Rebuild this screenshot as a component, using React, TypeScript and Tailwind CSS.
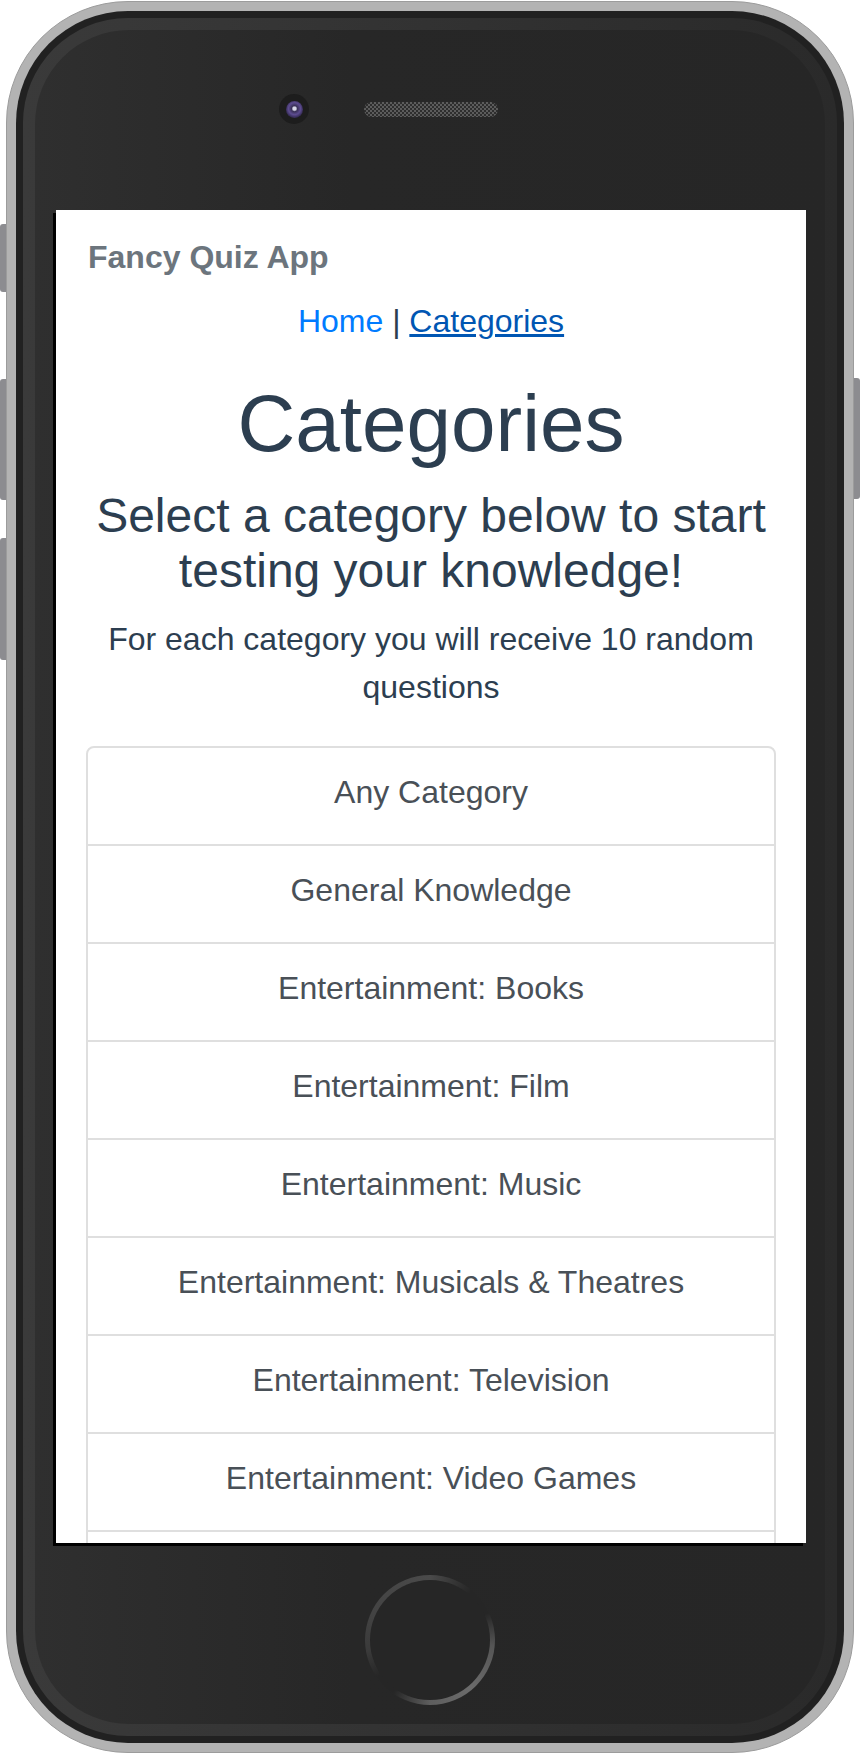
import React from "react";

const categories = [
    "Any Category",
    "General Knowledge",
    "Entertainment: Books",
    "Entertainment: Film",
    "Entertainment: Music",
    "Entertainment: Musicals & Theatres",
    "Entertainment: Television",
    "Entertainment: Video Games",
    "Entertainment: Board Games",
];

const Screen: React.FC = () => {
    return (
        <div className="ml-[21px] mt-[86px] w-[750px] h-[1333px] bg-white overflow-hidden shadow-[-3px_3px_0_#000] font-['Liberation_Sans',Arial,sans-serif]">
            <div className="pt-[23px] pl-[32px]">
                <span className="text-[32px] leading-[48px] font-bold text-[#6c757d]">Fancy Quiz App</span>
            </div>
            <div className="mt-[16px] text-center text-[32px] leading-[48px] text-[#2c3e50]">
                <a className="text-[#007bff]">Home</a> | <a className="text-[#0056b3] underline">Categories</a>
            </div>
            <h1 className="mt-[31px] text-center text-[80px] leading-[1.2] text-[#2c3e50]">Categories</h1>
            <h4 className="mt-[16px] px-[30px] text-center text-[48px] leading-[55px] text-[#2c3e50]">
                Select a category below to start testing your knowledge!
            </h4>
            <p className="mt-[17px] px-[30px] text-center text-[32px] leading-[48px] text-[#2c3e50]">
                For each category you will receive 10 random questions
            </p>
            <ul className="mt-[35px] mx-[30px] border-2 border-[#dfdfdf] rounded-[8px] divide-y-2 divide-[#dfdfdf]">
                {categories.map((c) => (
                    <li key={c} className="pt-[20px] pb-[28px] text-center text-[32px] leading-[48px] text-[#495057]">
                        {c}
                    </li>
                ))}
            </ul>
        </div>
    );
};

const App: React.FC = () => {
    return (
        <div className="relative w-[862px] h-[1754px] bg-white">
            {/* side buttons */}
            <div className="absolute left-0 top-[223px] w-[7px] h-[68px] rounded-l-[3px] bg-[#8c8c90]" />
            <div className="absolute left-0 top-[378px] w-[7px] h-[121px] rounded-l-[3px] bg-[#8c8c90]" />
            <div className="absolute left-0 top-[537px] w-[7px] h-[122px] rounded-l-[3px] bg-[#8c8c90]" />
            <div className="absolute left-[853px] top-[377px] w-[7px] h-[121px] rounded-r-[3px] bg-[#8c8c90]" />

            <div className="relative ml-[6px] mt-[1px] w-[848px] h-[1752px] rounded-[122px] bg-[#b3b3b3] border border-[#9c9c9c] p-[9px]">
                <div className="h-full rounded-[112px] bg-[#212121] p-[7px]">
                    <div className="h-full rounded-[105px] bg-linear-to-r from-[#3a3a3a] to-[#2a2a2a] p-[12px]">
                        <div className="h-full rounded-[94px] bg-linear-to-r from-[#2f2f2f] via-[#272727] via-40% to-[#262626] pt-[64px]">
                            <div className="flex items-center h-[30px] pl-[244px]">
                                <div className="w-[30px] h-[30px] rounded-full bg-[#1d1d1d] flex items-center justify-center">
                                    <div className="w-[17px] h-[17px] rounded-full bg-[radial-gradient(circle_at_50%_45%,#d8d8e8_0,#d8d8e8_1.5px,#3a3158_3px,#5d4c90_6px,#3a2f5c_8.5px)]" />
                                </div>
                                <div className="ml-[55px] w-[134px] h-[15px] rounded-full bg-[conic-gradient(#5c5c5c_25%,#2e2e2e_0_50%,#5c5c5c_0_75%,#2e2e2e_0)] bg-[length:4px_4px]" />
                            </div>
                            <Screen />
                            <div className="mx-auto mt-[32px] w-[130px] h-[130px] rounded-full p-[5px] bg-[conic-gradient(#4a4a4a_0deg,#262626_40deg,#262626_65deg,#555555_95deg,#6b6b6b_140deg,#5e5e5e_180deg,#262626_215deg,#262626_235deg,#3a3a3a_260deg,#444444_300deg,#4a4a4a_360deg)]">
                                <div className="w-full h-full rounded-full bg-[#262626]" />
                            </div>
                        </div>
                    </div>
                </div>
            </div>
        </div>
    );
};

export default App;
